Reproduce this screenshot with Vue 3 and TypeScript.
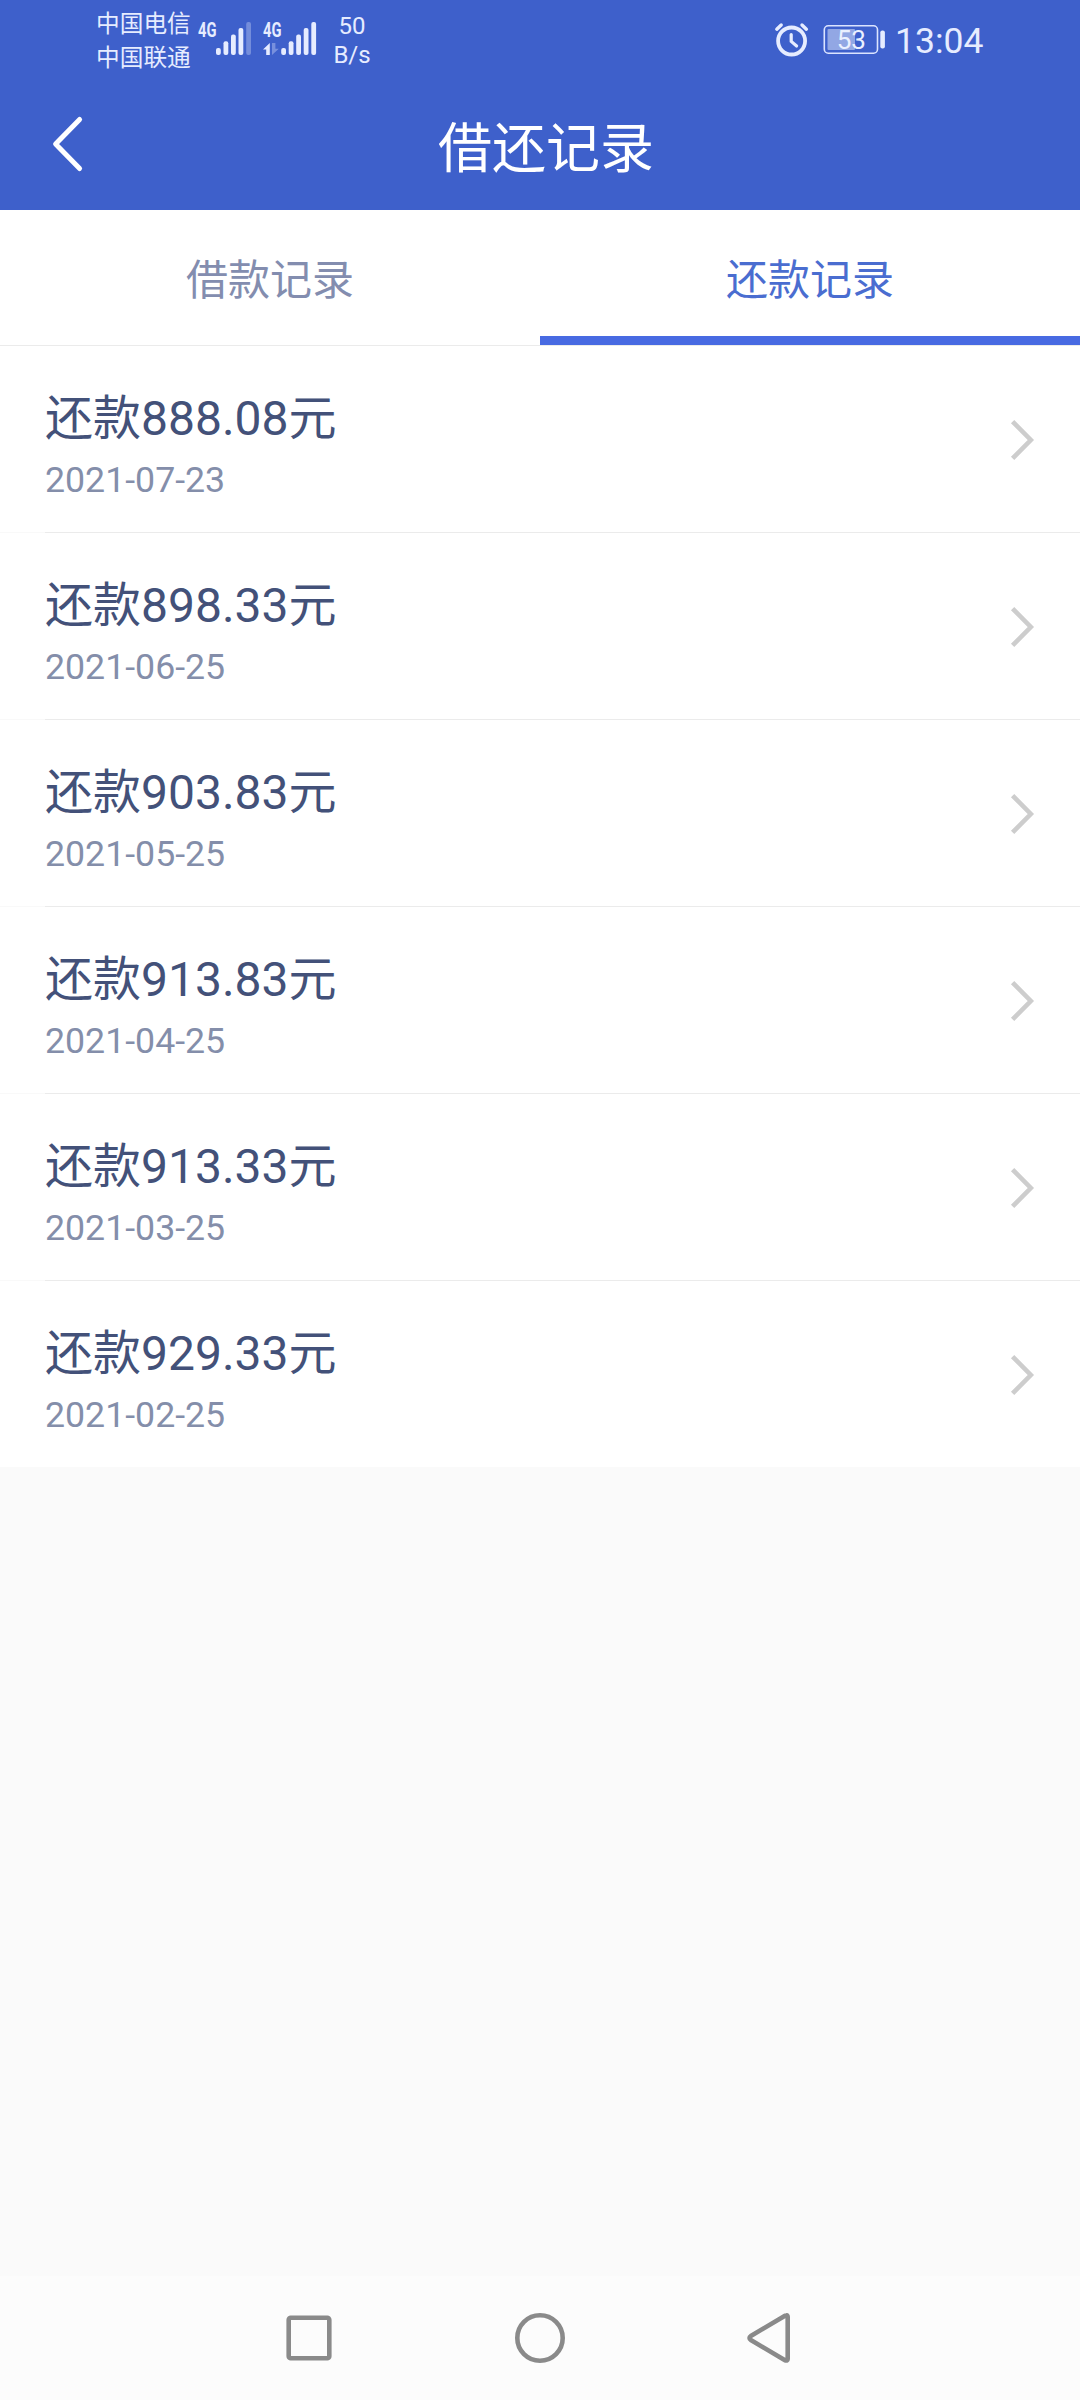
<script setup lang="ts">
interface RepaymentRecord {
  amount: string
  date: string
}

const tabs: string[] = ['借款记录', '还款记录']
const activeTab = 1

const records: RepaymentRecord[] = [
  { amount: '888.08', date: '2021-07-23' },
  { amount: '898.33', date: '2021-06-25' },
  { amount: '903.83', date: '2021-05-25' },
  { amount: '913.83', date: '2021-04-25' },
  { amount: '913.33', date: '2021-03-25' },
  { amount: '929.33', date: '2021-02-25' },
]
</script>

<template>
  <div class="screen">
    <header class="header">
      <div class="status">
        <div class="carriers">
          <span>中国电信</span>
          <span>中国联通</span>
        </div>
        <svg class="signal" width="120" height="80" viewBox="197 0 120 80" fill="#e6ecff">
          <text x="198" y="37" textLength="18.5" lengthAdjust="spacingAndGlyphs">4G</text>
          <rect x="216" y="48" width="4.8" height="7" rx="2" />
          <rect x="223.5" y="41.3" width="4.8" height="13.7" rx="2" />
          <rect x="231" y="34.6" width="4.8" height="20.4" rx="2" />
          <rect x="238.5" y="28" width="4.8" height="27" rx="2" />
          <rect x="246.2" y="22" width="4.8" height="33" rx="2" opacity=".32" />
          <text x="263" y="37" textLength="18.5" lengthAdjust="spacingAndGlyphs">4G</text>
          <path d="M269.8 43V55H266.2V49.5H263Z" />
          <path d="M272 43V55L278.8 48.8H275.4V43Z" opacity=".35" />
          <rect x="281.2" y="48" width="4.8" height="7" rx="2" />
          <rect x="288.7" y="41.3" width="4.8" height="13.7" rx="2" />
          <rect x="296.2" y="34.6" width="4.8" height="20.4" rx="2" />
          <rect x="303.7" y="28" width="4.8" height="27" rx="2" />
          <rect x="311.3" y="22" width="4.8" height="33" rx="2" />
        </svg>
        <div class="speed">
          <span>50</span>
          <span>B/s</span>
        </div>
        <div class="status-right">
          <svg width="36" height="80" viewBox="774 0 36 80" fill="none" stroke="#e6ecff" stroke-linecap="round" stroke-linejoin="round">
            <circle cx="791.6" cy="41" r="13.5" stroke-width="3.8" />
            <path d="M791.2 34.5V41.4L796.6 46" stroke-width="3.2" />
            <path d="M776.8 29.2L781.2 25M802 25L806.4 29.2" stroke-width="3.4" />
          </svg>
          <svg class="battery" width="64" height="80" viewBox="822 0 64 80">
            <rect x="824.3" y="25.8" width="53.2" height="27.4" rx="4" fill="none" stroke="#dbe4ff" stroke-width="1.6" />
            <rect x="827.5" y="29" width="27.5" height="21" rx="1" fill="#92a7e4" />
            <rect x="880.3" y="30.5" width="4.6" height="18" rx="2" fill="#e6ecff" />
            <text x="851.3" y="49.3" text-anchor="middle" fill="#eaf0ff">53</text>
          </svg>
          <span class="clock">13:04</span>
        </div>
      </div>
      <div class="titlebar">
        <svg class="back" width="36" height="60" viewBox="50 114 36 60" fill="none" stroke="#fff" stroke-width="5" stroke-linecap="round" stroke-linejoin="round">
          <path d="M79.6 119.5L55.6 144L79.6 168.5" />
        </svg>
        <h1>借还记录</h1>
      </div>
    </header>

    <nav class="tabs">
      <div v-for="(tab, i) in tabs" :key="tab" class="tab" :class="{ active: i === activeTab }">{{ tab }}</div>
    </nav>

    <main class="list">
      <div v-for="r in records" :key="r.date" class="row">
        <div class="info">
          <div class="amount">还款{{ r.amount }}元</div>
          <div class="date">{{ r.date }}</div>
        </div>
        <svg width="28" height="44" viewBox="0 0 28 44" fill="none" stroke="#cdcdcd" stroke-width="4.6">
          <path d="M3.6 3.6L21.8 22L3.6 40.4" />
        </svg>
      </div>
    </main>

    <footer class="navbar">
      <svg width="56" height="56" viewBox="-28 -28 56 56"><rect x="-20.3" y="-20.2" width="40.6" height="40.4" rx="2" /></svg>
      <svg width="56" height="56" viewBox="-28 -28 56 56"><circle r="22.7" /></svg>
      <svg width="56" height="56" viewBox="743 2310 56 56"><path d="M786.4 2315.4Q787.7 2315 787.7 2317V2359Q787.7 2361 785 2360.3L750.8 2340Q748.2 2338 750.8 2336L785 2315.7Z" /></svg>
    </footer>
  </div>
</template>

<style>
body {
  margin: 0;
}
</style>

<style scoped>
.screen {
  width: 1080px;
  height: 2400px;
  display: flex;
  flex-direction: column;
  background: #fafafa;
  font-family: Roboto, 'Noto Sans CJK SC', sans-serif;
  overflow: hidden;
}
svg {
  display: block;
  flex: none;
}
.header {
  height: 210px;
  background: #3e60cb;
}
.status {
  height: 80px;
  display: flex;
  color: #e6ecff;
}
.carriers {
  width: 101px;
  margin-left: 96px;
  padding-top: 8px;
  display: flex;
  flex-direction: column;
  font-size: 23.7px;
  line-height: 33.5px;
  white-space: nowrap;
}
.signal text {
  font: 700 21px Roboto, sans-serif;
}
.speed {
  width: 50px;
  margin-left: 10px;
  padding-top: 12px;
  display: flex;
  flex-direction: column;
  align-items: center;
  font-size: 24px;
  line-height: 28.5px;
}
.status-right {
  display: flex;
  margin-left: 397px;
}
.battery {
  margin-left: 12px;
}
.battery text {
  font: 400 26px Roboto, sans-serif;
}
.clock {
  margin-left: 9px;
  font-size: 35.5px;
  line-height: 82px;
}
.titlebar {
  height: 130px;
  display: grid;
  grid-template-columns: 50px 36px 1fr 74px;
}
.back {
  grid-column: 2;
  margin-top: 34px;
}
h1 {
  grid-column: 3;
  margin: 0;
  text-align: center;
  color: #fff;
  font-size: 54px;
  font-weight: 400;
  line-height: 139px;
}
.tabs {
  box-sizing: border-box;
  height: 136px;
  display: flex;
  background: #fff;
  border-bottom: 1px solid #ebebeb;
}
.tab {
  box-sizing: border-box;
  width: 540px;
  height: 135px;
  border-bottom: 9px solid transparent;
  text-align: center;
  font-size: 42px;
  line-height: 141px;
  color: #838daf;
}
.tab.active {
  color: #4a6dd0;
  border-color: #486ae2;
}
.list {
  background: #fff;
  height: 1121px;
}
.row {
  box-sizing: border-box;
  height: 187px;
  padding: 0 43px 0 45px;
  display: flex;
  justify-content: space-between;
  align-items: center;
  background: linear-gradient(to right, #f9f9f9 45px, #ebebeb 45px) bottom / 100% 1px no-repeat;
}
.row:last-child {
  background: none;
}
.info {
  padding-top: 10px;
}
.amount {
  font-size: 48px;
  line-height: 70px;
  color: #435179;
}
.date {
  font-size: 35.7px;
  line-height: 52px;
  color: #848eaa;
}
.navbar {
  height: 124px;
  margin-top: auto;
  display: flex;
  justify-content: center;
  align-items: center;
  gap: 175px;
  background: #fcfcfc;
}
.navbar svg {
  fill: none;
  stroke: #8a8a8a;
  stroke-width: 4.6;
  stroke-linejoin: round;
}
</style>
